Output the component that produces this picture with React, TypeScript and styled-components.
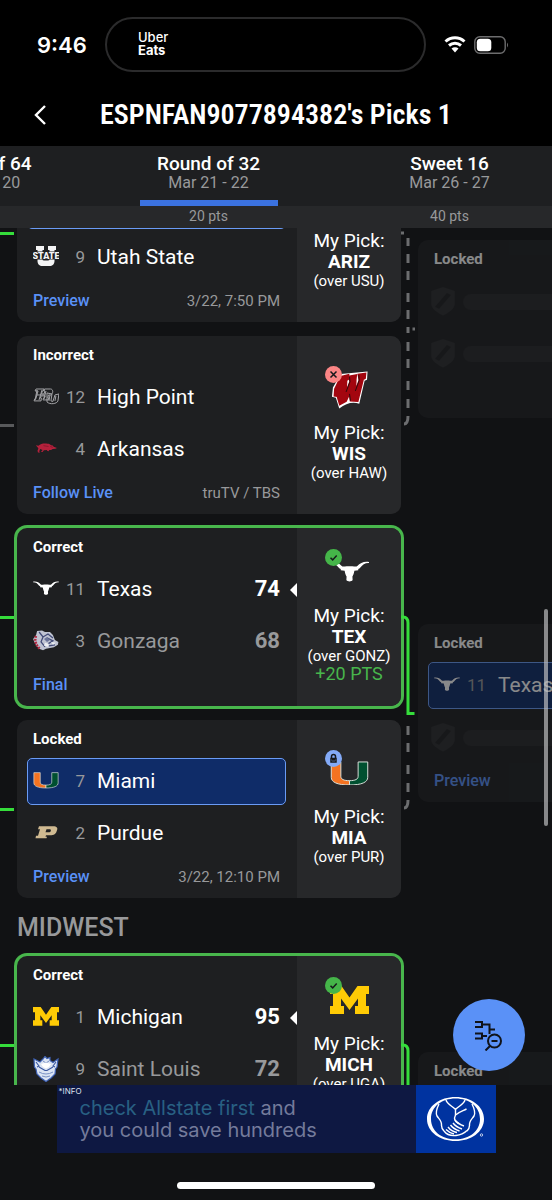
import React, { useLayoutEffect, useRef } from "react";
import styled, { createGlobalStyle } from "styled-components";

const color = {
  page: "#111214",
  card: "#1e1f21",
  panel: "#27282a",
  blue: "#5a91f7",
  green: "#48b64c",
  line: "#35dd3b",
  muted: "#98999b",
};

const GlobalStyle = createGlobalStyle`
  *, *::before, *::after { box-sizing: border-box; }
  body { margin: 0; background: ${color.page}; }
  button { font: inherit; color: inherit; border: 0; padding: 0; background: none; cursor: pointer; }
  a { text-decoration: none; color: inherit; }
  h1, h2, h3, p { margin: 0; font-weight: inherit; }
`;

const Screen = styled.div`
  display: flex;
  flex-direction: column;
  height: 100vh;
  overflow: hidden;
  background: ${color.page};
  color: #fff;
  font-family: Roboto, "Liberation Sans", sans-serif;
`;

/* ---------- top bars ---------- */

const StatusBar = styled.div`
  display: flex;
  align-items: center;
  flex: none;
  padding-top: 17px;
  background: #000;
`;

const Clock = styled.time`
  width: 105px;
  padding-left: 37px;
  font: 600 22px/24px Inter, sans-serif;
`;

const Island = styled.div`
  display: flex;
  flex: 1;
  flex-direction: column;
  height: 55px;
  padding: 12px 0 0 31px;
  border: 2px solid #2b2b2c;
  border-radius: 28px;
  font: 500 13px/13px Inter, sans-serif;
`;

const IslandText = styled.span<{ $strong?: boolean }>`
  font-weight: ${(p) => (p.$strong ? 700 : 500)};
`;

const StatusIcons = styled.div`
  display: flex;
  align-items: center;
  gap: 8px;
  width: 126px;
  padding-left: 18px;
`;

const TitleBar = styled.header`
  display: flex;
  align-items: center;
  flex: none;
  padding: 25px 32px 13px;
  background: #000;
`;

const BackButton = styled.button`
  display: flex;
  width: 24px;
  height: 24px;
  align-items: center;
`;

const Title = styled.h1`
  flex: 1;
  padding-right: 24px;
  text-align: center;
  white-space: nowrap;
  font: 600 28px/36px "Liberation Sans Narrow", "Roboto Condensed", "DejaVu Sans Condensed", sans-serif;
`;

const Rounds = styled.nav`
  display: grid;
  grid-template-columns: 220px 237px 245px;
  flex: none;
  overflow: auto hidden;
  scrollbar-width: none;
  background: linear-gradient(${color.card} 60px, ${color.panel} 60px);
`;

const RoundTab = styled.button`
  display: flex;
  flex-direction: column;
  align-items: center;
  height: 82px;
  padding-top: 8px;
`;

const RoundName = styled.span`
  font-size: 19px;
  font-weight: 500;
  line-height: 20px;
`;

const RoundDates = styled.span`
  color: ${color.muted};
  font-size: 16px;
  line-height: 18px;
`;

const RoundMarker = styled.span<{ $active?: boolean }>`
  width: 138px;
  height: 6px;
  margin-top: 8px;
  background: ${(p) => (p.$active ? "#3b72e0" : "transparent")};
`;

const RoundPoints = styled.span`
  color: ${color.muted};
  font-size: 14px;
  line-height: 20px;
`;

/* ---------- bracket ---------- */

const Stage = styled.main`
  position: relative;
  flex: 1;
  min-height: 0;
`;

const Scroller = styled.div`
  height: 100%;
  overflow: hidden auto;
  scrollbar-width: none;
`;

const Region = styled.h2`
  padding: 15px 17px 13px;
  color: ${color.muted};
  font-size: 25px;
  font-weight: 500;
  line-height: 30px;
`;

const Pair = styled.section`
  display: grid;
  grid-template-columns: 401px 17px 384px;
  align-items: center;

  & + & { margin-top: 14px; }
`;

const Games = styled.div`
  display: grid;
  gap: 14px;
`;

const GameRow = styled.div`
  display: grid;
  grid-template-columns: 17px 384px;
  align-items: center;
`;

const Stub = styled.span<{ $won?: boolean }>`
  height: 3px;
  margin-right: 3px;
  background: ${(p) => (p.$won ? color.line : "#58595b")};
`;

const Card = styled.article<{ $correct?: boolean; $future?: boolean }>`
  display: flex;
  height: 178px;
  border-radius: 10px;
  background: ${color.card};
  opacity: ${(p) => (p.$future ? 0.5 : 1)};
  box-shadow: ${(p) => (p.$correct ? `0 0 0 3px ${color.green}` : "none")};
`;

const Details = styled.div`
  flex: 1;
  padding: 10px 11px 10px 10px;
`;

const Status = styled.h3`
  padding-left: 6px;
  margin-bottom: 10px;
  font-size: 15px;
  font-weight: 700;
  line-height: 18px;
`;

const Team = styled.div<{ $picked?: boolean; $lost?: boolean; $empty?: boolean }>`
  position: relative;
  display: grid;
  grid-template-columns: 26px 27px 1fr auto;
  align-items: center;
  height: 47px;
  margin-bottom: 5px;
  padding: 0 5px ${(p) => (p.$empty ? 0 : 2)}px ${(p) => (p.$empty ? 1 : 5)}px;
  border: 1px solid ${(p) => (p.$picked ? "#6a9bf5" : "transparent")};
  border-radius: 5px;
  background: ${(p) => (p.$picked ? "#0f2c68" : "transparent")};
  color: ${(p) => (p.$lost ? color.muted : "#fff")};
`;

const LogoSlot = styled.span`
  display: flex;
  align-items: center;
  justify-content: center;
`;

const Seed = styled.span`
  padding-right: 1px;
  color: ${color.muted};
  font-size: 17px;
  line-height: 24px;
  text-align: right;
`;

const TeamName = styled.span`
  padding-left: 11px;
  font-size: 21px;
  line-height: 26px;
`;

const Score = styled.strong`
  font-size: 22px;
  font-weight: 700;
  line-height: 26px;
`;

const WinMark = styled.i`
  position: absolute;
  right: -12px;
  top: 16px;
  border: solid transparent;
  border-width: 7px 7px 7px 0;
  border-right-color: #fff;
`;

const Placeholder = styled.span`
  grid-column: 2 / -1;
  height: 16px;
  margin-left: 7px;
  border-radius: 8px;
  background: ${color.panel};
`;

const Footer = styled.div`
  display: flex;
  justify-content: space-between;
  padding: 4px 6px 0;
  line-height: 22px;
`;

const GameLink = styled.a`
  color: ${color.blue};
  font-size: 16px;
  font-weight: 500;
`;

const GameTime = styled.span`
  color: ${color.muted};
  font-size: 15px;
`;

const Pick = styled.aside`
  display: flex;
  flex-direction: column;
  align-items: center;
  justify-content: center;
  width: 104px;
  border-radius: 0 10px 10px 0;
  background: ${color.panel};
  white-space: nowrap;
`;

const PickLogo = styled.div`
  position: relative;
  display: flex;
  align-items: center;
  justify-content: center;
  width: 40px;
  height: 42px;
  margin-bottom: 12px;
`;

const Badge = styled.span<{ $tone: string }>`
  position: absolute;
  left: -4px;
  top: -2px;
  display: flex;
  width: 17px;
  height: 17px;
  border-radius: 50%;
  background: ${(p) => p.$tone};
`;

const PickLabel = styled.span`
  font-size: 19px;
  line-height: 21px;
`;

const PickTeam = styled.strong`
  font-size: 19px;
  line-height: 21px;
`;

const PickOver = styled.span`
  font-size: 15px;
  line-height: 18px;
`;

const PickPoints = styled.span`
  color: ${color.green};
  font-size: 18px;
  line-height: 18px;
`;

const ScrollThumb = styled.span`
  position: absolute;
  top: 381px;
  right: 4px;
  width: 4px;
  height: 217px;
  border-radius: 2px;
  background: rgba(200, 200, 202, 0.65);
`;

const ZoomButton = styled.button`
  position: absolute;
  right: 27px;
  bottom: 14px;
  display: flex;
  align-items: center;
  justify-content: center;
  width: 72px;
  height: 72px;
  border-radius: 50%;
  background: ${color.blue};
`;

/* ---------- bottom ---------- */

const BottomBar = styled.footer`
  display: flex;
  flex-direction: column;
  align-items: center;
  flex: none;
  padding-bottom: 11px;
`;

const Ad = styled.a`
  display: flex;
  width: 439px;
  height: 68px;
  margin-bottom: 29px;
`;

const AdCopy = styled.span`
  position: relative;
  flex: 1;
  padding: 12px 0 0 23px;
  background: #0e1842;
  color: #747b9b;
  font: 400 20px/22px Inter, "Liberation Sans", sans-serif;
`;

const AdInfo = styled.small`
  position: absolute;
  left: 2px;
  top: 1px;
  color: #dfe2ee;
  font-size: 8px;
  font-weight: 400;
  line-height: 10px;
`;

const AdAccent = styled.span`
  color: #286083;
`;

const AdLogo = styled.span`
  display: flex;
  align-items: center;
  justify-content: center;
  width: 80px;
  background: #0033a0;
`;

const HomeIndicator = styled.span`
  width: 198px;
  height: 7px;
  border-radius: 4px;
  background: #fff;
`;

/* ---------- team marks ---------- */

type MarkProps = { size: number };
type Mark = (p: MarkProps) => React.ReactElement;

const Longhorn: Mark = ({ size }) => (
  <svg width={size} height={size * 0.55} viewBox="0 0 40 22" fill="#fff">
    <path d="M0 1C5 0 9 2 12 5.2c1 1 3 .4 5 .2h6c2 .2 4 .8 5-.2C31 2 35 0 40 1v1c-4-.2-6.500 1.500-9.500 5.500L29 8.200v1.300l-4 .5c-.5 3-1.200 4.500-2 6l.2 3.500c-1.200 2-5.200 2-6.400 0L17 16c-.8-1.500-1.500-3-2-6l-4-.5V8.200l-1.500-.7C6.500 3.500 4 1.800 0 2z" />
  </svg>
);

const BlockM: Mark = ({ size }) => (
  <svg width={size} height={size * 0.72} viewBox="0 0 39 28" fill="#ffcb05">
    <path d="M0 0h11.500l8 11.500L27.500 0H39v8h-3v12h3v8H25v-8h3v-7.500L19.500 24 11 12.500V20h3v8H0v-8h3V8H0z" />
  </svg>
);

const Hurricane: Mark = ({ size }) => (
  <svg width={size} height={size * 0.64} viewBox="0 0 40 26" stroke="#dfe6e0" strokeWidth="1">
    <path d="M1 1h10v15c0 3 3 4.500 9 4.500V25C7 25 1 22 1 17z" fill="#f47321" />
    <path d="M39 1H29v15c0 3-3 4.500-9 4.500V25c13 0 19-3 19-8z" fill="#005030" />
  </svg>
);

const MotionW: Mark = ({ size }) => (
  <svg width={size} height={size} viewBox="0 0 40 40">
    <path d="M11 4 38.500 1.500 38 10l-2.500 1L30 34.500Q20 31 9.500 39.500L6 28.500l-4-1L3 18z" fill="#fff" />
    <path
      d="M11 7l8-2-.5 4.500-1.500 1-.5 12L20.500 12l-1-5.500L27 5l-.5 4.500-.5 12L30 10.500l-1-6 7.500-1L36 8.500l-2 1L28.500 32l-7.500-.5-1-7-3.500 7.500-6.500 3.500L7.500 27l-3-.5.5-7z"
      fill="#a3060f"
      stroke="#a3060f"
      strokeWidth="1.600"
    />
    <path d="M16.500 22.500 20.500 12l-.5-5M26 21.500l4-11-.5-5.500M20 24.500l1 7" fill="none" stroke="#2a0a0c" strokeWidth="1" />
  </svg>
);

const AggieU: Mark = ({ size }) => (
  <svg width={size} height={size * 0.77} viewBox="0 0 26 20">
    <path d="M3 0h8v4H9.500v9.500q0 1 1.500 1h4q1.500 0 1.500-1V4H15V0h8v4h-1.500v11c0 3-2 5-5 5h-7c-3 0-5-2-5-5V4H3z" fill="#f4f4f5" />
    <path d="M0 5.500h26v8H0z" fill={color.card} />
    <text x="13" y="12.500" textAnchor="middle" fill="#f4f4f5" fontFamily="Roboto, sans-serif" fontWeight="900" fontSize="9">STATE</text>
  </svg>
);

const Panther: Mark = ({ size }) => (
  <svg width={size} height={size * 0.65} viewBox="0 0 26 17" fill="none" stroke="#a5a5a8" strokeWidth="1">
    <path d="M3 1h8l-.7 2h-1L8.500 6H11l1-3h-1l.5-2h6c3 0 3 5 0 6h-2l-.7 3h1l-.5 2H10l.5-2h1l.7-2H8l-.7 2h1L8 13H1l.7-2h1L5 3H2z" />
    <path d="M14 5l5 1-1 7 2 .5L22 7l4-1-1 7c-1 3-8 4-11 1zM4 2 2 12M9 2 6 12M13 3l-2 8M17 7l-1 6M23 8l-1 5M3 7h9" />
  </svg>
);

const Razorback: Mark = ({ size }) => (
  <svg width={size - 4} height={size * 0.4} viewBox="0 0 26 12">
    <path d="M1 2.500 4 3C7 .5 11 0 15 .8c2 0 3 .8 4 1.700l2 .2 1 1.600 4 1.500-2 .8-3 .4-2 1-2 0-1 1.500-2-.5.5-1-4 .5-1.500 2H7l2-2.500-3-1-1 3 1 1H3.500l-.5-2 1-3z" fill="#b5213c" />
    <path d="M10 3l6 1M18 4l3 1" stroke="#6b1426" strokeWidth=".7" />
  </svg>
);

const Bulldog: Mark = ({ size }) => (
  <svg width={size} height={size * 0.8} viewBox="0 0 26 21">
    <path d="M4 1l5-.5 3 1.500 5 0 3 3 2 5 3.500 2-.5 3-4 2.500-8 1.500-3 1.500-4-1.500-4-5L0 9l3-4z" fill="#bfc3d2" />
    <path d="M3 6C1 10 3 16 7 19" fill="none" stroke="#b32841" strokeWidth="2.500" strokeDasharray="2 1" />
    <path d="M6 2l4 5 5-3 5 4M10 7l-2 5 4 5M14 8l6 3-5 3M16 16l6-1" fill="none" stroke="#424b78" strokeWidth="1.300" />
    <path d="M11 9l3-2 3 3-3 2z" fill="#6b749a" />
    <path d="M12 13l4 1-1 3-4-1zM18 12l5 1-3 2z" fill="#eceef3" />
  </svg>
);

const Boilermaker: Mark = ({ size }) => (
  <svg width={size} height={size * 0.56} viewBox="0 0 26 14">
    <path d="M6 1h14c4 0 5 2 4 4-1 4-3 5-7 5h-4l-.5 1.500H14L13.500 13H2.500L3 10.500h2L7 4H5zM13.500 4l-1 3h4c1.500 0 2-3 .5-3z" fill="#cfb991" fillRule="evenodd" />
  </svg>
);

const Billiken: Mark = ({ size }) => (
  <svg width={size} height={size} viewBox="0 0 26 26">
    <path d="M1 3l6 3 3-3 2-2.500 2 2 3-1v3l3 2 5-3.500-1 8-1.500 2-.5 5-4 4-5 3.500L8 22l-4-4-1-5-1.500-2z" fill="#dbe4f3" stroke="#3f62b5" strokeWidth="1.200" />
    <path d="M3 6l3 4-2 1M23 6l-3 4 2 1M6 11l6 3.500h2l6-3.500" fill="none" stroke="#38559f" strokeWidth="1.100" />
    <path d="M6 16q7 4 14 0M9 20q4 2 8 0M10 5l3 2 3-2" fill="none" stroke="#7890c4" strokeWidth="1" />
    <path d="M8 8l5-1.500L18 8l-2 3-3 1.500L10 11z" fill="#fff" />
  </svg>
);

const Shield: Mark = ({ size }) => (
  <svg width={size} height={size * 1.1} viewBox="0 0 26 29">
    <path d="M13 0l12 4v13c0 5-6 9-12 12C7 26 1 22 1 17V4z" fill="#2b2c2e" />
    <path d="M5 20 17 6l4 2L9 22z" fill={color.card} />
  </svg>
);

/* ---------- bracket pieces ---------- */

const badges = {
  correct: { tone: "#45b549", d: "M5.500 8.700l2.200 2.200 4-4.300" },
  incorrect: { tone: "#fb8585", d: "M5.500 5.500l6 6M11.500 5.500l-6 6" },
  locked: { tone: "#83aaf7", d: "M6.500 8V6.500a2 2 0 0 1 4 0V8M6 8.500h5v3.500H6zM7 10h3" },
};

type TeamInfo = { mark?: Mark; seed?: number; name?: string; score?: number; picked?: boolean; lost?: boolean; won?: boolean };
type PickInfo = { badge: keyof typeof badges; mark: Mark; team: string; over: string; points?: string };
type Game = { status: string; teams: TeamInfo[]; link?: string; time?: string; pick?: PickInfo; advanced?: boolean };

const TeamRow = ({ team }: { team: TeamInfo }) => {
  const MarkIcon = team.mark ?? Shield;
  return (
    <Team $picked={team.picked} $lost={team.lost} $empty={!team.name}>
      <LogoSlot aria-hidden><MarkIcon size={26} /></LogoSlot>
      {team.name ? (
        <>
          <Seed>{team.seed}</Seed>
          <TeamName>{team.name}</TeamName>
          {team.score !== undefined && <Score>{team.score}</Score>}
        </>
      ) : (
        <Placeholder />
      )}
      {team.won && <WinMark />}
    </Team>
  );
};

const PickPanel = ({ pick }: { pick: PickInfo }) => {
  const MarkIcon = pick.mark;
  const badge = badges[pick.badge];
  return (
    <Pick>
      <PickLogo>
        <MarkIcon size={39} />
        <Badge $tone={badge.tone}>
          <svg width="17" height="17" viewBox="0 0 17 17" fill="none" stroke="#16181b" strokeWidth="1.500">
            <path d={badge.d} />
          </svg>
        </Badge>
      </PickLogo>
      <PickLabel>My Pick:</PickLabel>
      <PickTeam>{pick.team}</PickTeam>
      <PickOver>(over {pick.over})</PickOver>
      {pick.points && <PickPoints>{pick.points}</PickPoints>}
    </Pick>
  );
};

const GameCard = ({ game, future }: { game: Game; future?: boolean }) => (
  <Card $correct={game.status === "Correct"} $future={future}>
    <Details>
      <Status>{game.status}</Status>
      {game.teams.map((team, i) => <TeamRow key={i} team={team} />)}
      <Footer>
        {game.link && <GameLink href="#game">{game.link}</GameLink>}
        {game.time && <GameTime>{game.time}</GameTime>}
      </Footer>
    </Details>
    {game.pick && <PickPanel pick={game.pick} />}
  </Card>
);

const Connector = ({ advanced }: { advanced?: boolean }) => (
  <svg width="17" height="370" viewBox="0 0 17 370" fill="none" stroke="#6c6d6f" strokeWidth="3">
    <path d="M7 198v9M7 215v9M7 237v9M7 255v9M7 272q0 8-4 8" />
    {advanced ? (
      <path d="M0 89h2q5 0 5 6v90.500h6.500" stroke={color.line} />
    ) : (
      <path d="M0 89h3M7 94v8M7 110v9M7 127v9M7 149v9M7 166v9M7 183v6M11.500 185h2.500" />
    )}
  </svg>
);

type PairInfo = { games: Game[]; next: Game; advanced?: boolean };

const BracketPair = ({ pair }: { pair: PairInfo }) => (
  <Pair>
    <Games>
      {pair.games.map((game, i) => (
        <GameRow key={i}>
          <Stub $won={game.advanced} />
          <GameCard game={game} />
        </GameRow>
      ))}
    </Games>
    <Connector advanced={pair.advanced} />
    <GameCard game={pair.next} future />
  </Pair>
);

const west: PairInfo[] = [
  {
    games: [
      {
        status: "Locked",
        advanced: true,
        teams: [{ seed: 1, name: "Arizona", picked: true }, { mark: AggieU, seed: 9, name: "Utah State" }],
        link: "Preview",
        time: "3/22, 7:50 PM",
        pick: { badge: "locked", mark: Shield, team: "ARIZ", over: "USU" },
      },
      {
        status: "Incorrect",
        teams: [{ mark: Panther, seed: 12, name: "High Point" }, { mark: Razorback, seed: 4, name: "Arkansas" }],
        link: "Follow Live",
        time: "truTV / TBS",
        pick: { badge: "incorrect", mark: MotionW, team: "WIS", over: "HAW" },
      },
    ],
    next: { status: "Locked", teams: [{}, {}] },
  },
  {
    advanced: true,
    games: [
      {
        status: "Correct",
        advanced: true,
        teams: [
          { mark: Longhorn, seed: 11, name: "Texas", score: 74, won: true },
          { mark: Bulldog, seed: 3, name: "Gonzaga", score: 68, lost: true },
        ],
        link: "Final",
        pick: { badge: "correct", mark: Longhorn, team: "TEX", over: "GONZ", points: "+20 PTS" },
      },
      {
        status: "Locked",
        advanced: true,
        teams: [{ mark: Hurricane, seed: 7, name: "Miami", picked: true }, { mark: Boilermaker, seed: 2, name: "Purdue" }],
        link: "Preview",
        time: "3/22, 12:10 PM",
        pick: { badge: "locked", mark: Hurricane, team: "MIA", over: "PUR" },
      },
    ],
    next: { status: "Locked", teams: [{ mark: Longhorn, seed: 11, name: "Texas", picked: true }, {}], link: "Preview" },
  },
];

const midwest: PairInfo[] = [
  {
    advanced: true,
    games: [
      {
        status: "Correct",
        advanced: true,
        teams: [
          { mark: BlockM, seed: 1, name: "Michigan", score: 95, won: true },
          { mark: Billiken, seed: 9, name: "Saint Louis", score: 72, lost: true },
        ],
        link: "Final",
        pick: { badge: "correct", mark: BlockM, team: "MICH", over: "UGA", points: "+20 PTS" },
      },
      { status: "Locked", teams: [{}, {}] },
    ],
    next: { status: "Locked", teams: [{}, {}] },
  },
];

const rounds = [
  { name: "Round of 64", dates: "Mar 19 - 20", points: "10 pts" },
  { name: "Round of 32", dates: "Mar 21 - 22", points: "20 pts", active: true },
  { name: "Sweet 16", dates: "Mar 26 - 27", points: "40 pts" },
];

export default function App() {
  const roundsRef = useRef<HTMLElement>(null);
  const bracketRef = useRef<HTMLDivElement>(null);

  useLayoutEffect(() => {
    if (roundsRef.current) roundsRef.current.scrollLeft = 130;
    if (bracketRef.current) bracketRef.current.scrollTop = 84;
  }, []);

  return (
    <Screen>
      <GlobalStyle />
      <StatusBar>
        <Clock>9:46</Clock>
        <Island>
          <IslandText>Uber</IslandText>
          <IslandText $strong>Eats</IslandText>
        </Island>
        <StatusIcons>
          <svg width="22" height="17" viewBox="0 0 22 17" fill="none" stroke="#fff" strokeWidth="3">
            <path d="M1.500 5.500c5.500-5 13.500-5 19 0M5 9.500c3.500-3 8.500-3 12 0" />
            <path d="M7.500 12.500c2-1.800 5-1.800 7 0L11 16.500z" fill="#fff" stroke="none" />
          </svg>
          <svg width="35" height="18" viewBox="0 0 35 18">
            <rect x=".8" y=".8" width="30.400" height="16.400" rx="5" fill="none" stroke="#6d6d6e" strokeWidth="1.400" />
            <rect x="2.800" y="2.800" width="14.500" height="12.400" rx="3.500" fill="#fff" />
            <path d="M33 6.500q2 2.500 0 5z" fill="#6d6d6e" />
          </svg>
        </StatusIcons>
      </StatusBar>

      <TitleBar>
        <BackButton aria-label="Back">
          <svg width="14" height="20" viewBox="0 0 14 20" fill="none" stroke="#fff" strokeWidth="2.400">
            <path d="M13 1 4 10l9 9" />
          </svg>
        </BackButton>
        <Title>ESPNFAN9077894382's Picks 1</Title>
      </TitleBar>

      <Rounds ref={roundsRef} aria-label="Rounds">
        {rounds.map((round) => (
          <RoundTab key={round.name}>
            <RoundName>{round.name}</RoundName>
            <RoundDates>{round.dates}</RoundDates>
            <RoundMarker $active={round.active} />
            <RoundPoints>{round.points}</RoundPoints>
          </RoundTab>
        ))}
      </Rounds>

      <Stage>
        <Scroller ref={bracketRef}>
          {west.map((pair, i) => <BracketPair key={i} pair={pair} />)}
          <Region>MIDWEST</Region>
          {midwest.map((pair, i) => <BracketPair key={i} pair={pair} />)}
        </Scroller>
        <ScrollThumb />
        <ZoomButton aria-label="Zoom out bracket">
          <svg width="28" height="31" viewBox="0 0 28 31" fill="none" stroke="#101319" strokeWidth="2">
            <path d="M0 2h7v5H0M7 4.500h7.500V14M14.500 9.500h5.500M0 13.500h7v5H0M7 16h5" />
            <circle cx="19.500" cy="21" r="6.500" />
            <path d="M16.500 21h6M15 26l-4.500 4.500" />
          </svg>
        </ZoomButton>
      </Stage>

      <BottomBar>
        <Ad href="#ad">
          <AdCopy>
            <AdInfo>*INFO</AdInfo>
            <AdAccent>check Allstate first</AdAccent> and
            <br />
            you could save hundreds
          </AdCopy>
          <AdLogo>
            <svg width="58" height="46" viewBox="0 0 58 46" fill="none" stroke="#fff" strokeWidth="1.400" role="img" aria-label="Allstate">
              <path fill="#fff" stroke="none" fillRule="evenodd" d="M28.500 1C44 1 57 10 57 23S44 45 28.500 45 0 36 0 23 13 1 28.500 1zM28.500 2.600C14.500 2.600 4 11 4 23s10.500 20.300 24.500 20.300S53 35 53 23 42.500 2.600 28.500 2.600z" />
              <path d="M19 4c1 4 6 6 9.500 9.500C32 10 37 8 38 4M28.500 13.500V19M12 8c-2 4-4 8-2 12 2 3 5 5 4.500 9.500 0 3 1 4 2.500 5.500M45 8c2 4 4 8 2 12-2 3-5 5-4.500 9.500 0 3-1 4-2.500 5.500" />
              <path d="M28.500 19c-2 4 0 7 3 8.500M28.500 19c3-3 7-4 11-6M17 35c3 4 8 5 12 4.500 5-.5 8-2 11-5" />
              <path d="M28 24c3 4 6 5 9 6M26 27c3 4 6 5 9 6M23.500 29c3 4 6 5 9 6M21 31c3 4 6 5 9 5.500M19 33.500c3 3 5 4 8 4.500" />
              <circle cx="54.500" cy="39" r="1.200" strokeWidth=".7" />
            </svg>
          </AdLogo>
        </Ad>
        <HomeIndicator />
      </BottomBar>
    </Screen>
  );
}
